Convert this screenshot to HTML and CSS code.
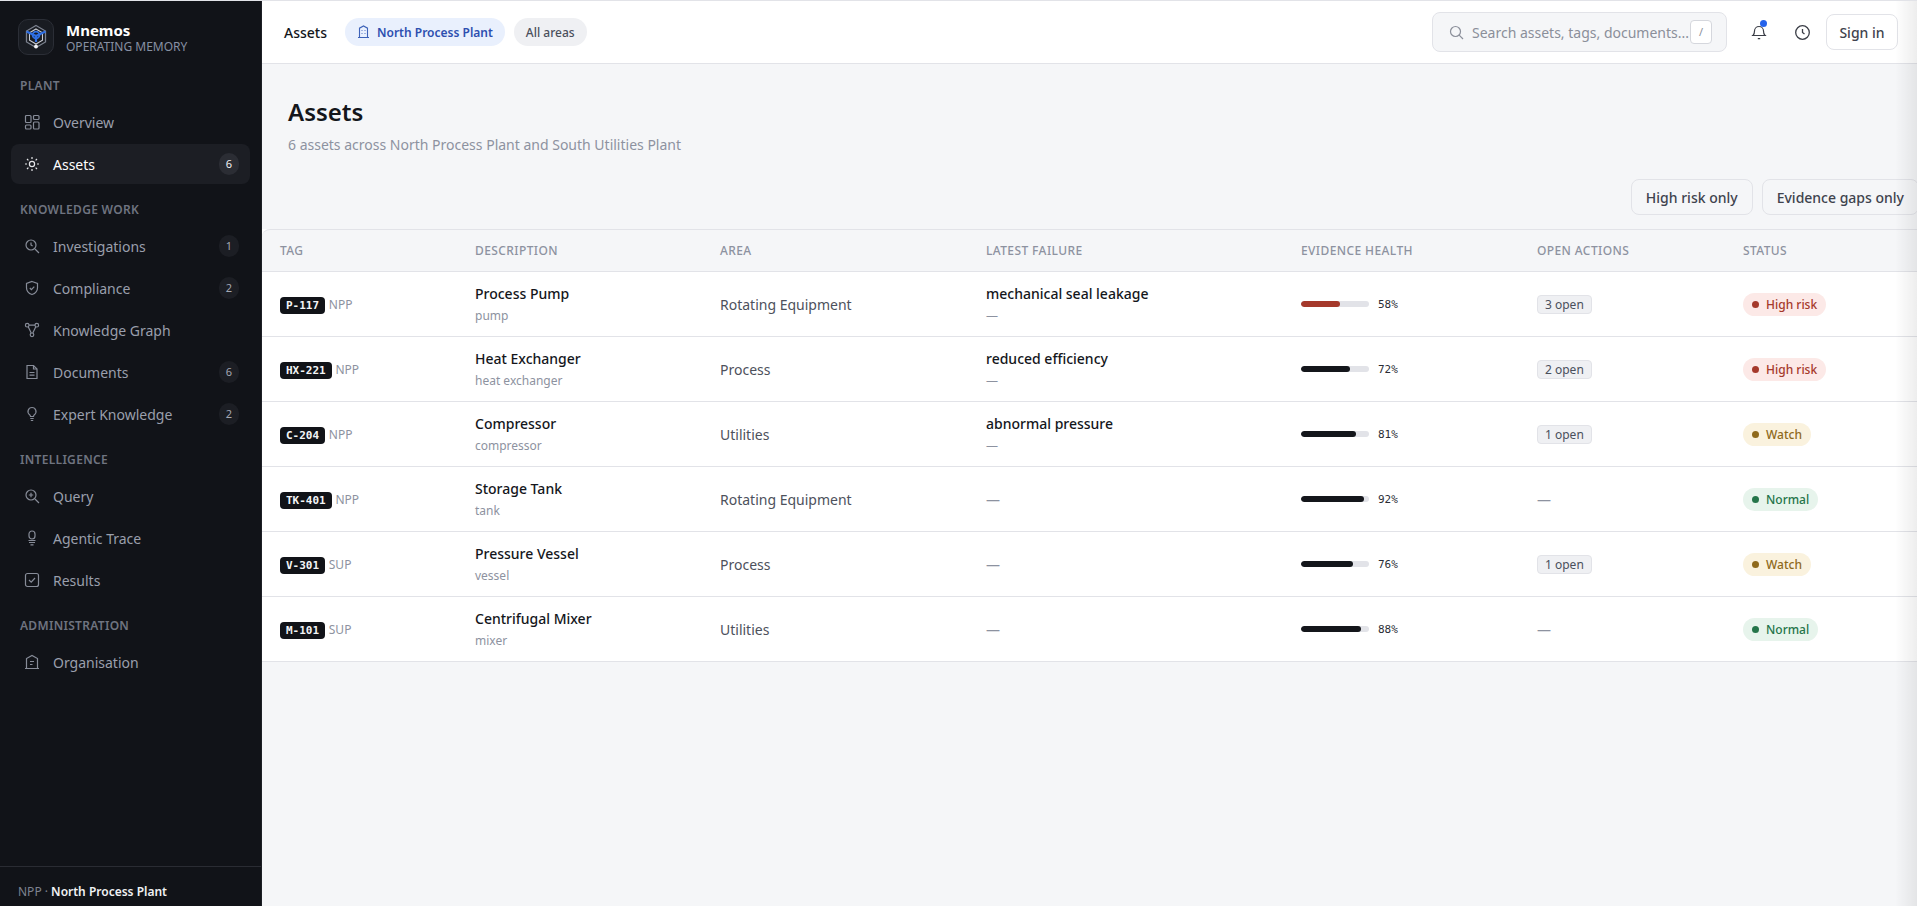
FILE: index.html
```html
<!DOCTYPE html>
<html lang="en">
<head>
<meta charset="UTF-8">
<meta name="viewport" content="width=device-width, initial-scale=1.0">
<title>Mnemos - Assets</title>
<link rel="stylesheet" href="styles.css">
</head>

<body>
<div class="app">
    <aside class="sidebar">
        <div class="brand">
            <div class="brand-logo">
                <svg width="24" height="26" viewBox="0 0 24 26" fill="none">
                    <path d="M12 1.5l9.5 5.5v11L12 23.5 2.5 18V7z" stroke="#7b818e" stroke-width="1.3"/>
                    <path d="M12 5l6.5 3.7v7.6L12 20l-6.5-3.7V8.7z" stroke="#c9ccd4" stroke-width="1.1"/>
                    <path d="M2.5 7.5L12 12l9.5-4.5M12 12v6" stroke="#2f6fe4" stroke-width="2.2"/>
                    <circle cx="12" cy="11" r="3.4" stroke="#2f6fe4" stroke-width="1.8"/>
                    <circle cx="12" cy="22.5" r="1.9" fill="#f2f3f5"/>
                </svg>
            </div>
            <div>
                <div class="brand-name">Mnemos</div>
                <div class="brand-sub">OPERATING MEMORY</div>
            </div>
        </div>

        <nav class="nav">
            <div class="nav-label first">PLANT</div>
            <a class="nav-item">
                <svg class="nav-icon" viewBox="0 0 16 16"><rect x="1.5" y="1.5" width="5.5" height="7" rx="1"/><rect x="9.5" y="1.5" width="5.5" height="4" rx="1"/><rect x="9.5" y="8" width="5.5" height="7" rx="1"/><rect x="1.5" y="11" width="5.5" height="4" rx="1"/></svg>
                Overview
            </a>
            <a class="nav-item active">
                <svg class="nav-icon" viewBox="0 0 16 16"><circle cx="8" cy="8" r="2.6"/><path d="M8 1v2M8 13v2M1 8h2M13 8h2M3 3l1.4 1.4M11.6 11.6L13 13M3 13l1.4-1.4M11.6 4.4L13 3"/></svg>
                Assets
                <span class="count">6</span>
            </a>

            <div class="nav-label">KNOWLEDGE WORK</div>
            <a class="nav-item">
                <svg class="nav-icon" viewBox="0 0 16 16"><circle cx="7" cy="7" r="5"/><path d="M11 11l4 4M7 4.5V7l1.6 1"/></svg>
                Investigations
                <span class="count">1</span>
            </a>
            <a class="nav-item">
                <svg class="nav-icon" viewBox="0 0 16 16"><path d="M8 1.5l5.5 2v4.2c0 3.4-2.3 5.7-5.5 6.8-3.2-1.1-5.5-3.4-5.5-6.8V3.5z"/><path d="M5.8 8l1.6 1.6 2.9-3"/></svg>
                Compliance
                <span class="count">2</span>
            </a>
            <a class="nav-item">
                <svg class="nav-icon" viewBox="0 0 16 16"><circle cx="3.2" cy="3.2" r="1.8"/><circle cx="12.8" cy="3.2" r="1.8"/><circle cx="8" cy="12.8" r="1.8"/><path d="M5 3.2h6M4.2 4.8L7.2 11M11.8 4.8L8.8 11"/></svg>
                Knowledge Graph
            </a>
            <a class="nav-item">
                <svg class="nav-icon" viewBox="0 0 16 16"><path d="M3 1.5h6.5L13 5v9.5H3z"/><path d="M9.5 1.5V5H13M5.5 8.5h5M5.5 11.2h5"/></svg>
                Documents
                <span class="count">6</span>
            </a>
            <a class="nav-item">
                <svg class="nav-icon" viewBox="0 0 16 16"><path d="M8 1.5a4 4 0 0 0-2.4 7.2c.5.5.8 1 .9 1.8h3c.1-.8.4-1.3.9-1.8A4 4 0 0 0 8 1.5z"/><path d="M6.3 12.5h3.4M6.8 14.5h2.4"/></svg>
                Expert Knowledge
                <span class="count">2</span>
            </a>

            <div class="nav-label">INTELLIGENCE</div>
            <a class="nav-item">
                <svg class="nav-icon" viewBox="0 0 16 16"><circle cx="7" cy="7" r="5"/><path d="M11 11l4 4M7 4.8v4.4M4.8 7h4.4"/></svg>
                Query
            </a>
            <a class="nav-item">
                <svg class="nav-icon" viewBox="0 0 16 16"><rect x="5" y="1" width="6" height="8" rx="3"/><path d="M4.5 10.5h7M5 12.5h6M6.5 14.8h3"/></svg>
                Agentic Trace
            </a>
            <a class="nav-item">
                <svg class="nav-icon" viewBox="0 0 16 16"><rect x="1.5" y="1.5" width="13" height="13" rx="2"/><path d="M5 8l2.2 2.2L11 6"/></svg>
                Results
            </a>

            <div class="nav-label">ADMINISTRATION</div>
            <a class="nav-item">
                <svg class="nav-icon" viewBox="0 0 16 16"><path d="M2.5 14.5V4.5L8 1.5l5.5 3v10zM1 14.5h14M6 7.5h4M6 10.5h2.5"/></svg>
                Organisation
            </a>
        </nav>

        <div class="sidebar-foot">NPP · <b>North Process Plant</b></div>
    </aside>

    <div class="content">
        <header class="topbar">
            <span class="crumb">Assets</span>
            <span class="chip chip-plant">
                <svg width="13" height="14" viewBox="0 0 13 14" fill="none" stroke="#3d62b8" stroke-width="1.1"><path d="M2.5 12.5V3.2L6.5 1l4 2.2v9.3zM1 12.5h11M5 5v.8M8 5v.8M5 8v.8M8 8v.8"/></svg>
                North Process Plant
            </span>
            <span class="chip">All areas</span>

            <div class="topbar-right">
                <div class="search">
                    <svg width="15" height="15" viewBox="0 0 15 15" fill="none" stroke="#8b8f9a" stroke-width="1.2"><circle cx="6.5" cy="6.5" r="5"/><path d="M10.2 10.2l3.8 3.8"/></svg>
                    <span class="search-text">Search assets, tags, documents...</span>
                    <span class="kbd">/</span>
                </div>
                <button class="icon-btn">
                    <svg width="18" height="18" viewBox="0 0 18 18" fill="none" stroke="#3b3e47" stroke-width="1.2"><path d="M3 12.5c1-1 1.5-2 1.5-4.5a4.5 4.5 0 0 1 9 0c0 2.500.5 3.500 1.500 4.500zM1.800 12.500h14.400M7.800 15.700h2.400"/></svg>
                    <span class="dot"></span>
                </button>
                <button class="icon-btn">
                    <svg width="17" height="17" viewBox="0 0 17 17" fill="none" stroke="#3b3e47" stroke-width="1.3"><circle cx="8.500" cy="8.500" r="6.800"/><path d="M8.500 5v3.500l2 1.500"/></svg>
                </button>
                <button class="btn signin">Sign in</button>
            </div>
        </header>

        <main class="page">
            <h1>Assets</h1>
            <p class="page-sub">6 assets across North Process Plant and South Utilities Plant</p>

            <div class="filters">
                <button class="btn">High risk only</button>
                <button class="btn">Evidence gaps only</button>
            </div>

            <table class="assets">
                <colgroup>
                    <col class="col-tag"><col class="col-desc"><col class="col-area"><col class="col-fail"><col class="col-health"><col class="col-open"><col class="col-status">
                </colgroup>
                <thead>
                    <tr>
                        <th>TAG</th><th>DESCRIPTION</th><th>AREA</th><th>LATEST FAILURE</th><th>EVIDENCE HEALTH</th><th>OPEN ACTIONS</th><th>STATUS</th>
                    </tr>
                </thead>
                <tbody>
                    <tr>
                        <td><span class="tag">P-117</span> <span class="plant">NPP</span></td>
                        <td><div class="main-text">Process Pump</div><div class="sub-text">pump</div></td>
                        <td class="area">Rotating Equipment</td>
                        <td><div class="main-text">mechanical seal leakage</div><div class="sub-text">—</div></td>
                        <td><div class="health"><div class="bar"><div class="fill fill-risk" style="width:58%"></div></div><span class="pct">58%</span></div></td>
                        <td><span class="open">3 open</span></td>
                        <td><span class="status high"><i></i>High risk</span></td>
                    </tr>
                    <tr>
                        <td><span class="tag">HX-221</span> <span class="plant">NPP</span></td>
                        <td><div class="main-text">Heat Exchanger</div><div class="sub-text">heat exchanger</div></td>
                        <td class="area">Process</td>
                        <td><div class="main-text">reduced efficiency</div><div class="sub-text">—</div></td>
                        <td><div class="health"><div class="bar"><div class="fill" style="width:72%"></div></div><span class="pct">72%</span></div></td>
                        <td><span class="open">2 open</span></td>
                        <td><span class="status high"><i></i>High risk</span></td>
                    </tr>
                    <tr>
                        <td><span class="tag">C-204</span> <span class="plant">NPP</span></td>
                        <td><div class="main-text">Compressor</div><div class="sub-text">compressor</div></td>
                        <td class="area">Utilities</td>
                        <td><div class="main-text">abnormal pressure</div><div class="sub-text">—</div></td>
                        <td><div class="health"><div class="bar"><div class="fill" style="width:81%"></div></div><span class="pct">81%</span></div></td>
                        <td><span class="open">1 open</span></td>
                        <td><span class="status watch"><i></i>Watch</span></td>
                    </tr>
                    <tr>
                        <td><span class="tag">TK-401</span> <span class="plant">NPP</span></td>
                        <td><div class="main-text">Storage Tank</div><div class="sub-text">tank</div></td>
                        <td class="area">Rotating Equipment</td>
                        <td class="none">—</td>
                        <td><div class="health"><div class="bar"><div class="fill" style="width:92%"></div></div><span class="pct">92%</span></div></td>
                        <td class="none">—</td>
                        <td><span class="status normal"><i></i>Normal</span></td>
                    </tr>
                    <tr>
                        <td><span class="tag">V-301</span> <span class="plant">SUP</span></td>
                        <td><div class="main-text">Pressure Vessel</div><div class="sub-text">vessel</div></td>
                        <td class="area">Process</td>
                        <td class="none">—</td>
                        <td><div class="health"><div class="bar"><div class="fill" style="width:76%"></div></div><span class="pct">76%</span></div></td>
                        <td><span class="open">1 open</span></td>
                        <td><span class="status watch"><i></i>Watch</span></td>
                    </tr>
                    <tr>
                        <td><span class="tag">M-101</span> <span class="plant">SUP</span></td>
                        <td><div class="main-text">Centrifugal Mixer</div><div class="sub-text">mixer</div></td>
                        <td class="area">Utilities</td>
                        <td class="none">—</td>
                        <td><div class="health"><div class="bar"><div class="fill" style="width:88%"></div></div><span class="pct">88%</span></div></td>
                        <td class="none">—</td>
                        <td><span class="status normal"><i></i>Normal</span></td>
                    </tr>
                </tbody>
            </table>
        </main>
    </div>
    <div class="edge-shade"></div>
</div>
</body>
</html>
```

FILE: styles.css
```css
* {
    box-sizing: border-box;
}
html, body {
    margin: 0;
    height: 100%;
    overflow: hidden;
}
body {
    font-family: "Noto Sans", "Open Sans", sans-serif;
    font-size: 14px;
    color: #14161b;
    background: #f5f6f8;
}
button {
    font-family: inherit;
}
.app {
    position: relative;
    display: flex;
    height: 100%;
    border-top: 1px solid #e2e3e8;
    overflow: hidden;
}

/* sidebar */
.sidebar {
    width: 262px;
    flex-shrink: 0;
    display: flex;
    flex-direction: column;
    background: #111318;
    border-right: 1px solid #1d2026;
    color: #9a9fac;
}
.brand {
    display: flex;
    align-items: center;
    gap: 12px;
    padding: 18px 18px 0;
    height: 54px;
}
.brand-logo {
    width: 36px;
    height: 36px;
    display: flex;
    align-items: center;
    justify-content: center;
    background: #191c22;
    border: 1px solid #2b2e36;
    border-radius: 10px;
}
.brand-name {
    font-size: 15px;
    line-height: 18px;
    font-weight: 700;
    color: #fff;
}
.brand-sub {
    font-size: 12px;
    line-height: 15px;
    color: #8790a3;
}
.nav {
    flex: 1;
    padding: 0 11px;
}
.nav-label {
    margin: 18px 9px 8px;
    font-size: 12px;
    line-height: 16px;
    font-weight: 600;
    letter-spacing: 0.3px;
    color: #6f7480;
}
.nav-label.first {
    margin-top: 23px;
}
.nav-item {
    display: flex;
    align-items: center;
    gap: 13px;
    height: 40px;
    margin-bottom: 2px;
    padding: 0 11px 0 13px;
    border-radius: 8px;
    font-size: 14px;
    color: #9a9fac;
}
.nav-item.active {
    background: #1c1e24;
    color: #fff;
}
.nav-icon {
    width: 16px;
    height: 16px;
    flex-shrink: 0;
    fill: none;
    stroke: #878c98;
    stroke-width: 1.2;
}
.nav-item.active .nav-icon {
    stroke: #e6e7ea;
}
.count {
    margin-left: auto;
    width: 20px;
    height: 22px;
    line-height: 22px;
    text-align: center;
    border-radius: 11px;
    background: #1c1e24;
    font-size: 11px;
    color: #a4a8b3;
}
.nav-item.active .count {
    background: #2b2d34;
    color: #f2f3f5;
}
.sidebar-foot {
    height: 40px;
    padding: 16px 18px 0;
    border-top: 1px solid #2a2c33;
    font-size: 12px;
    line-height: 17px;
    color: #7e8390;
}
.sidebar-foot b {
    font-weight: 600;
    color: #f0f1f3;
}

/* top bar */
.content {
    flex: 1;
    min-width: 0;
    display: flex;
    flex-direction: column;
}
.topbar {
    display: flex;
    align-items: center;
    height: 63px;
    padding: 0 19px 0 22px;
    background: #fff;
    border-bottom: 1px solid #e2e3e8;
    flex-shrink: 0;
}
.crumb {
    font-weight: 500;
    margin-right: 18px;
}
.chip {
    display: inline-flex;
    align-items: center;
    gap: 7px;
    height: 28px;
    padding: 0 12px;
    margin-right: 9px;
    border-radius: 14px;
    background: #eff0f3;
    font-size: 12px;
    font-weight: 500;
    color: #4a4f5c;
}
.chip-plant {
    background: #e9f0fd;
    color: #2d4fb0;
    font-weight: 600;
}
.topbar-right {
    margin-left: auto;
    display: flex;
    align-items: center;
}
.search {
    display: flex;
    align-items: center;
    width: 295px;
    height: 40px;
    padding: 0 14px 0 16px;
    background: #f5f6f8;
    border: 1px solid #e2e3e8;
    border-radius: 8px;
    color: #8b8f9a;
}
.search-text {
    margin-left: 8px;
    flex: 1;
    white-space: nowrap;
    font-size: 14px;
}
.kbd {
    width: 22px;
    height: 24px;
    line-height: 22px;
    text-align: center;
    background: #fff;
    border: 1px solid #d5d7dd;
    border-radius: 4px;
    font-size: 11px;
}
.icon-btn {
    position: relative;
    width: 40px;
    height: 36px;
    padding: 0;
    margin-left: 3px;
    display: flex;
    align-items: center;
    justify-content: center;
    background: none;
    border: none;
}
.icon-btn:first-of-type {
    margin-left: 12px;
}
.dot {
    position: absolute;
    top: 6px;
    right: 12px;
    width: 7px;
    height: 7px;
    border-radius: 50%;
    background: #2563eb;
}
.btn {
    height: 36px;
    padding: 0 14px;
    border: 1px solid #e2e3e8;
    border-radius: 8px;
    background: transparent;
    font-size: 14px;
    font-weight: 500;
    color: #3f434e;
    white-space: nowrap;
}
.signin {
    width: 72px;
    margin-left: 4px;
    padding: 0;
    background: #fff;
}

/* page */
.page {
    flex: 1;
    min-height: 0;
    background: #f5f6f8;
}
h1 {
    margin: 0;
    padding: 31px 26px 0;
    font-size: 24px;
    line-height: 33px;
    font-weight: 600;
}
.page-sub {
    margin: 0;
    padding: 7px 26px 0;
    font-size: 14px;
    line-height: 20px;
    color: #8d92a0;
}
.filters {
    display: flex;
    justify-content: flex-end;
    gap: 9px;
    margin-top: 24px;
    margin-right: -2px;
}
.assets {
    width: 1657px;
    margin-top: 14px;
    table-layout: fixed;
    border-collapse: separate;
    border-spacing: 0;
    background: #fff;
}
.col-tag { width: 195px; }
.col-desc { width: 245px; }
.col-area { width: 266px; }
.col-fail { width: 315px; }
.col-health { width: 236px; }
.col-open { width: 206px; }
.assets th {
    height: 43px;
    padding: 0 18px;
    text-align: left;
    font-size: 12px;
    font-weight: 500;
    letter-spacing: 0.4px;
    color: #8d92a0;
    background: #f5f6f8;
    border-top: 1px solid #e2e3e8;
    border-bottom: 1px solid #e2e3e8;
}
.assets th:first-child {
    border-top-left-radius: 8px;
}
.assets td {
    height: 65px;
    padding: 0 18px;
    border-bottom: 1px solid #e2e3e8;
}
.tag {
    display: inline-block;
    height: 17px;
    line-height: 17px;
    padding: 0 6px;
    border-radius: 4px;
    background: #111318;
    color: #f4f5f7;
    font-family: "DejaVu Sans Mono", "Liberation Mono", monospace;
    font-size: 11px;
    font-weight: 600;
}
.plant {
    font-size: 12px;
    color: #8d92a0;
}
.main-text {
    font-size: 14px;
    line-height: 20px;
    font-weight: 500;
    color: #14161b;
}
.sub-text {
    margin-top: 3px;
    font-size: 12px;
    line-height: 17px;
    color: #8d92a0;
}
.area {
    color: #4d515c;
}
.none {
    color: #8d92a0;
}
.health {
    display: flex;
    align-items: center;
    gap: 9px;
}
.bar {
    width: 68px;
    height: 6px;
    border-radius: 3px;
    background: #e2e3e8;
    overflow: hidden;
}
.fill {
    height: 100%;
    border-radius: 3px;
    background: #14161b;
}
.fill-risk {
    background: #a5392b;
}
.pct {
    font-family: "DejaVu Sans Mono", "Liberation Mono", monospace;
    font-size: 11px;
    color: #2a2d35;
}
.open {
    display: inline-block;
    height: 19px;
    line-height: 17px;
    padding: 0 7px;
    border: 1px solid #e2e3e8;
    border-radius: 4px;
    background: #eff0f3;
    font-size: 12px;
    color: #4a4f5c;
}
.status {
    display: inline-flex;
    align-items: center;
    gap: 7px;
    height: 23px;
    padding: 0 9px;
    border-radius: 12px;
    font-size: 12px;
    font-weight: 500;
}
.status i {
    width: 7px;
    height: 7px;
    border-radius: 50%;
    background: currentColor;
}
.status.high {
    background: #fce9e7;
    color: #a5392b;
}
.status.watch {
    background: #faf2de;
    color: #8f6a1c;
}
.status.normal {
    background: #e7f4ec;
    color: #25754a;
}
.edge-shade {
    position: absolute;
    top: 0;
    right: 0;
    bottom: 0;
    width: 22px;
    background: linear-gradient(to right, rgba(0, 0, 0, 0), rgba(0, 0, 0, 0.07));
    pointer-events: none;
}
```
